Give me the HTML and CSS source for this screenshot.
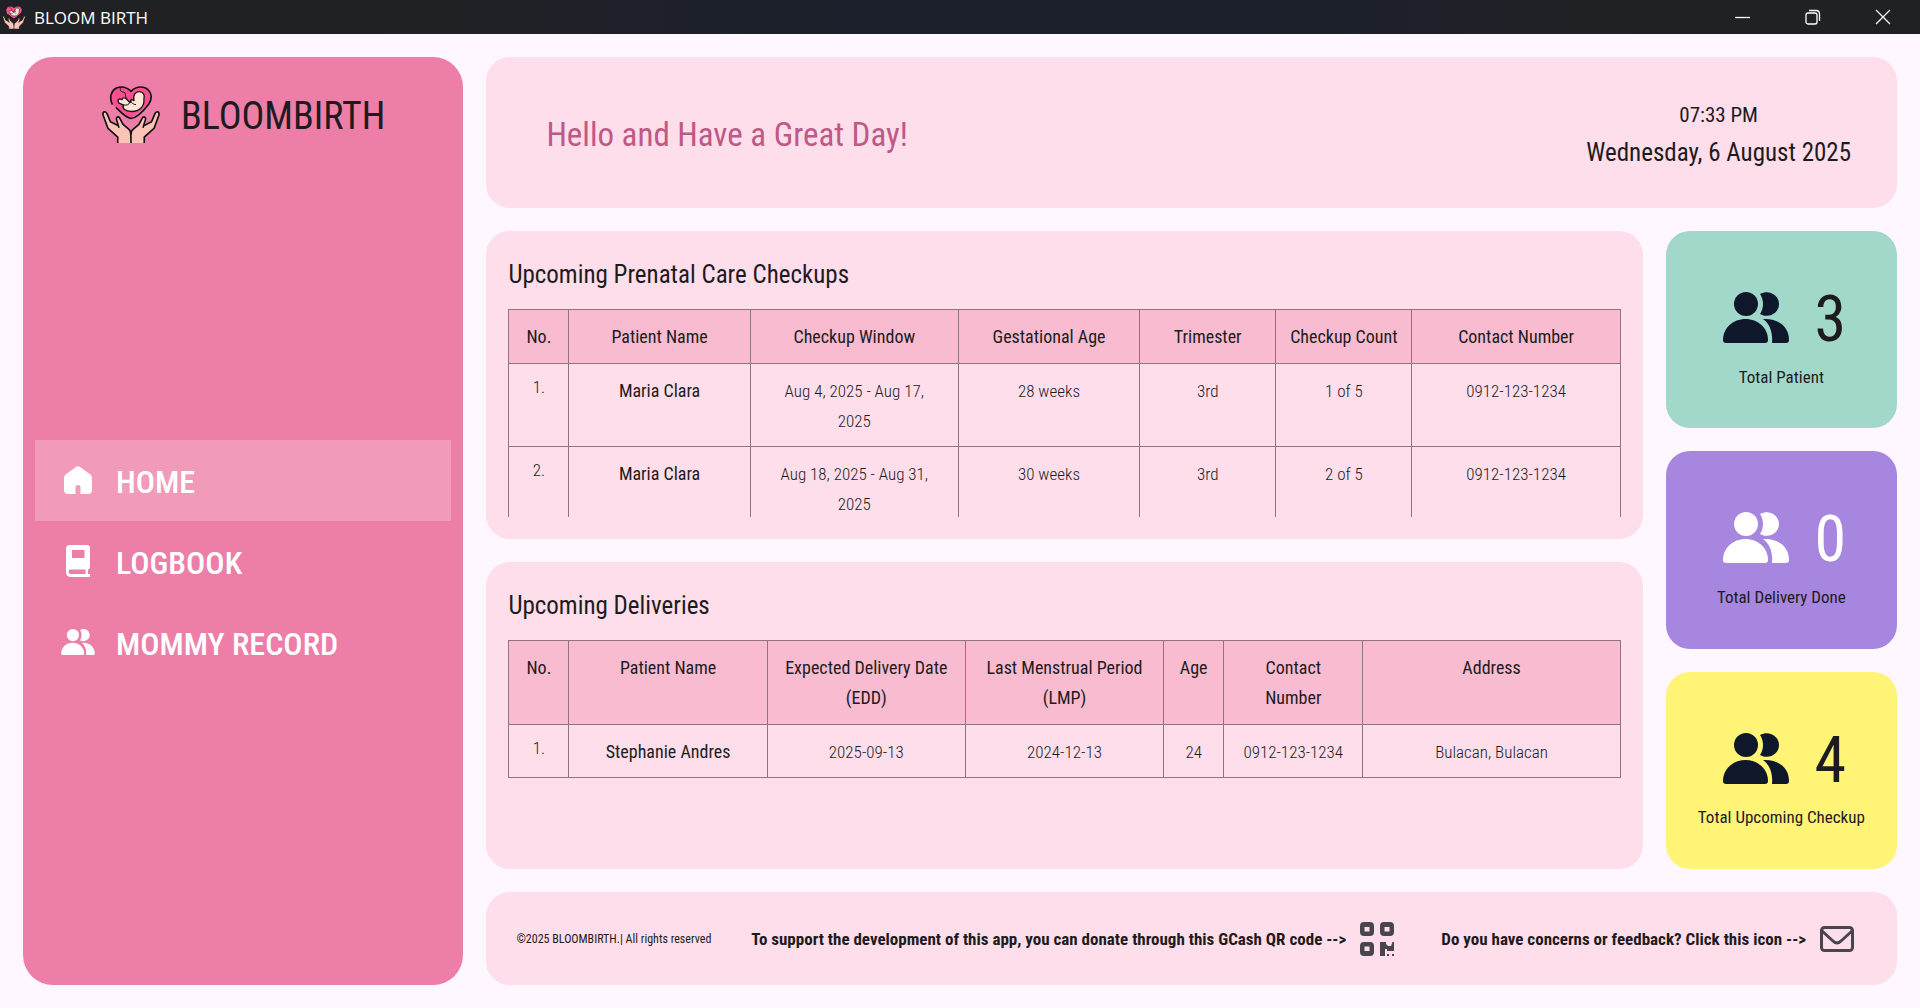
FILE: index.html
```html
<!DOCTYPE html>
<html lang="en">
<head>
<meta charset="utf-8">
<title>BLOOM BIRTH</title>
<meta name="viewport" content="width=device-width, initial-scale=1">
<link rel="stylesheet" href="styles.css">
</head>
<body>
<svg class="sprite" aria-hidden="true">
  <symbol id="logo" viewBox="30 25 180 175">
    <g stroke="#111" stroke-width="5" stroke-linejoin="round" stroke-linecap="round">
      <path stroke="none" fill="#fb4f92" d="M120 44C108 30 88 27 74 36 56 48 56 70 66 86L120 126 172 84C184 68 184 48 168 36 152 27 132 30 120 44Z"/>
      <path fill="none" d="M63 82C54 62 60 42 76 34 92 28 108 32 120 44 132 32 148 28 164 34 182 44 186 64 174 82 160 100 138 124 120 126 104 124 90 108 76 94"/>
      <path fill="#ffe6d6" stroke-width="4" d="M129 72C125 54 134 45 145 45 157 45 163 57 159 67 161 90 146 105 122 105 102 105 93 96 97 86L89 82C80 79 78 69 86 67L93 69C94 62 102 62 107 68L117 78 121 68Z"/>
      <path fill="none" stroke-width="3" d="M88 33C85 45 93 46 99 47 107 50 99 60 108 66M119 72C121 80 127 84 134 84M98 85C107 88 113 84 117 78"/>
      <path fill="#fdc4b5" stroke="none" d="M35 108C40 102 46 106 48 113L58 136 78 145 76 124C80 116 87 122 88 130L98 145 117 162 120 178 123 162 142 145 152 130C153 119 162 116 165 124L162 145 182 136 192 113C194 104 202 101 206 109L189 155 161 182V200H80V182L50 155Z"/>
      <path fill="none" d="M80 200V182L50 155 36 116C33 106 43 101 48 112L58 136 82 148M83 152 76 128C76 119 85 119 88 129L96 144 113 158C119 163 120 168 120 200M120 174C120 166 121 162 127 158L144 144 152 129C155 119 164 119 164 128L157 152M158 148 182 136 192 112C197 101 207 106 204 116L190 155 160 182V200"/>
    </g>
  </symbol>
  <symbol id="people" viewBox="0 0 66 51">
    <circle cx="23" cy="12" r="12"/>
    <path d="M37 2C46-3 56 3 56 12S46 27 37 22C41 16 41 8 37 2Z"/>
    <path d="M0 48C0 36 10 27 22.500 27S45 36 45 48Q45 51 42 51H3Q0 51 0 48Z"/>
    <path d="M40 27C54 26 66 34 66 48Q66 51 63 51H49C50 41 47 32 40 27Z"/>
  </symbol>
  <symbol id="home" viewBox="0 0 28 28">
    <path d="M12 1Q14-.7 16 1L26.500 8.500Q28 10 28 12V24Q28 28 24 28H16.500V21Q16.500 19 14 19T11.500 21V28H4Q0 28 0 24V12Q0 10 1.500 8.500Z"/>
  </symbol>
  <symbol id="book" viewBox="0 0 24 32">
    <path fill-rule="evenodd" d="M4 0H21Q24 0 24 3V22Q24 24 22 24.500V29H24V32H5Q0 32 0 27V4Q0 0 4 0ZM6 5V13H18.500V5ZM5 24.500Q2.500 24.500 2.500 26.700T5 29H19.500V24.500Z"/>
  </symbol>
  <symbol id="qr" viewBox="0 0 34 34">
    <path fill-rule="evenodd" d="M4 0H10Q14 0 14 4V10Q14 14 10 14H4Q0 14 0 10V4Q0 0 4 0ZM4.500 5V9.500H9.500V5ZM24 0H30Q34 0 34 4V10Q34 14 30 14H24Q20 14 20 10V4Q20 0 24 0ZM24.500 5V9.500H29.500V5ZM4 20H10Q14 20 14 24V30Q14 34 10 34H4Q0 34 0 30V24Q0 20 4 20ZM4.500 24.500V29H9.500V24.500Z"/>
    <path d="M20 20H26V22L28 24H31L32.500 20H34V29H27V27H25V34H20ZM27 32H29V34H27ZM32 32H34V34H32Z"/>
  </symbol>
  <symbol id="mail" viewBox="0 0 34 26">
    <g fill="none" stroke="currentColor" stroke-width="3" stroke-linejoin="round"><rect x="1.500" y="1.500" width="31" height="23" rx="3"/><path d="M2 5 13 15Q17 19 21 15L32 5"/></g>
  </symbol>
</svg>

<header class="titlebar">
  <svg class="titlebar-logo" aria-hidden="true"><use href="#logo"/></svg>
  <span class="titlebar-name">BLOOM BIRTH</span>
  <div class="window-controls">
    <button type="button" aria-label="Minimize"><svg viewBox="0 0 16 16"><path d="M0 8.500H15"/></svg></button>
    <button type="button" aria-label="Restore"><svg viewBox="0 0 16 16"><rect x="1" y="4" width="11" height="11" rx="2"/><path d="M4 1.500H11Q14.500 1.500 14.500 5V12"/></svg></button>
    <button type="button" aria-label="Close"><svg viewBox="0 0 16 16"><path d="M1 1 15 15M15 1 1 15"/></svg></button>
  </div>
</header>

<div class="app">
  <aside class="sidebar">
    <div class="brand">
      <svg class="brand-logo" aria-hidden="true"><use href="#logo"/></svg>
      <span>BLOOMBIRTH</span>
    </div>
    <nav class="menu">
      <a class="menu-item active" href="#home-page"><svg class="icon-home"><use href="#home"/></svg><span>HOME</span></a>
      <a class="menu-item" href="#logbook"><svg class="icon-book"><use href="#book"/></svg><span>LOGBOOK</span></a>
      <a class="menu-item" href="#mommy-record"><svg class="icon-people"><use href="#people"/></svg><span>MOMMY RECORD</span></a>
    </nav>
  </aside>

  <main class="main">
    <section class="card greeting">
      <h1>Hello and Have a Great Day!</h1>
      <div class="clock">
        <div class="clock-time">07:33 PM</div>
        <div class="clock-date">Wednesday, 6 August 2025</div>
      </div>
    </section>

    <div class="dashboard">
      <div class="panels">
        <section class="card panel">
          <h2>Upcoming Prenatal Care Checkups</h2>
          <div class="table-scroll">
            <table>
              <colgroup><col class="w-no"><col class="w-name"><col class="w-window"><col class="w-name"><col class="w-short"><col class="w-short"><col class="w-window"></colgroup>
              <thead>
                <tr><th>No.</th><th>Patient Name</th><th>Checkup Window</th><th>Gestational Age</th><th>Trimester</th><th>Checkup Count</th><th>Contact Number</th></tr>
              </thead>
              <tbody>
                <tr><td class="no">1.</td><td class="name">Maria Clara</td><td>Aug 4, 2025 - Aug 17, 2025</td><td>28 weeks</td><td>3rd</td><td>1 of 5</td><td>0912-123-1234</td></tr>
                <tr><td class="no">2.</td><td class="name">Maria Clara</td><td>Aug 18, 2025 - Aug 31, 2025</td><td>30 weeks</td><td>3rd</td><td>2 of 5</td><td>0912-123-1234</td></tr>
              </tbody>
            </table>
          </div>
        </section>

        <section class="card panel">
          <h2>Upcoming Deliveries</h2>
          <div class="table-scroll">
            <table>
              <colgroup><col class="w-no"><col class="w-date"><col class="w-date"><col class="w-date"><col class="w-no"><col class="w-contact"><col class="w-address"></colgroup>
              <thead>
                <tr><th>No.</th><th>Patient Name</th><th>Expected Delivery Date (EDD)</th><th>Last Menstrual Period (LMP)</th><th>Age</th><th>Contact Number</th><th>Address</th></tr>
              </thead>
              <tbody>
                <tr><td class="no">1.</td><td class="name">Stephanie Andres</td><td>2025-09-13</td><td>2024-12-13</td><td>24</td><td>0912-123-1234</td><td>Bulacan, Bulacan</td></tr>
              </tbody>
            </table>
          </div>
        </section>
      </div>

      <div class="stats">
        <section class="stat mint">
          <div class="stat-value"><svg><use href="#people"/></svg><span>3</span></div>
          <div class="stat-label">Total Patient</div>
        </section>
        <section class="stat purple">
          <div class="stat-value"><svg><use href="#people"/></svg><span>0</span></div>
          <div class="stat-label">Total Delivery Done</div>
        </section>
        <section class="stat yellow">
          <div class="stat-value"><svg><use href="#people"/></svg><span>4</span></div>
          <div class="stat-label">Total Upcoming Checkup</div>
        </section>
      </div>
    </div>

    <footer class="card footer">
      <small>©2025 BLOOMBIRTH.| All rights reserved</small>
      <div class="footer-item">
        <span>To support the development of this app, you can donate through this GCash QR code --&gt;</span>
        <button type="button" aria-label="Show GCash QR code"><svg class="icon-qr"><use href="#qr"/></svg></button>
      </div>
      <div class="footer-item">
        <span>Do you have concerns or feedback? Click this icon --&gt;</span>
        <button type="button" aria-label="Send feedback"><svg class="icon-mail"><use href="#mail"/></svg></button>
      </div>
    </footer>
  </main>
</div>
</body>
</html>
```
FILE: styles.css
```css
*, *::before, *::after { box-sizing: border-box; }

body {
  margin: 0;
  height: 100vh;
  min-height: 860px;
  display: flex;
  flex-direction: column;
  background: #fef7ff;
  color: #1d1b20;
  font-family: "Roboto Condensed", Roboto, "Liberation Sans", sans-serif;
}

h1, h2 { margin: 0; font-weight: 400; }
svg { display: block; flex: none; fill: currentColor; }
.sprite { position: absolute; width: 0; height: 0; }

button {
  border: 0;
  padding: 0;
  background: none;
  color: inherit;
  cursor: pointer;
}

/* Title bar */
.titlebar {
  flex: none;
  height: 34px;
  display: flex;
  align-items: center;
  gap: 8px;
  padding: 0 2px;
  background: linear-gradient(90deg, #202124 20%, #1b202c 45%, #1b202c 65%, #202124 85%);
  color: #fff;
}
.titlebar-logo { width: 24px; height: 24px; }
.titlebar-name { font: 17px "Open Sans", sans-serif; }
.window-controls { display: flex; margin-left: auto; }
.window-controls button {
  width: 70px;
  height: 34px;
  display: grid;
  place-items: center;
}
.window-controls svg {
  width: 16px;
  height: 16px;
  fill: none;
  stroke: #fff;
  stroke-width: 1.300;
}

/* Page frame */
.app {
  flex: 1;
  min-height: 0;
  display: flex;
  gap: 23px;
  padding: 23px;
}

.sidebar {
  flex: none;
  width: 23.5%;
  display: flex;
  flex-direction: column;
  padding: 26px 12px 8px;
  border-radius: 30px;
  background: #ec7ea8;
}
.brand {
  display: flex;
  align-items: center;
  justify-content: center;
  gap: 20px;
  font-size: 38px;
  line-height: 58px;
}
.brand span { padding-top: 4px; }
.brand-logo { width: 60px; height: 58px; }
.menu {
  flex: 1;
  display: flex;
  flex-direction: column;
  justify-content: center;
}
.menu-item {
  display: flex;
  align-items: center;
  height: 81px;
  padding-left: 26px;
  color: #fff;
  font-size: 32px;
  font-weight: 500;
  text-decoration: none;
}
.menu-item.active { background: #f19aba; }
.menu-item svg { width: 34px; margin-right: 21px; }
.menu-item span { padding-top: 4px; }
.icon-home { height: 28px; }
.icon-book { height: 32px; }
.icon-people { height: 26px; }

.main {
  flex: 1;
  min-width: 0;
  display: flex;
  flex-direction: column;
  gap: 23px;
}
.card { border-radius: 24px; background: #fddeea; }

.greeting {
  flex: none;
  min-height: 151px;
  display: flex;
  align-items: center;
  justify-content: space-between;
  padding: 3px 46px 0 60px;
}
.greeting h1 { color: #c05887; font-size: 33px; }
.clock { text-align: center; line-height: 37px; }
.clock-time { font-size: 21px; }
.clock-date { font-size: 25px; }

/* Dashboard */
.dashboard {
  flex: 1;
  min-height: 0;
  display: grid;
  grid-template-columns: 5fr 1fr;
  gap: 23px;
}
.panels, .stats {
  min-width: 0;
  min-height: 0;
  display: grid;
  gap: 23px;
}
.panels { grid-template-rows: repeat(2, minmax(0, 1fr)); }
.stats { grid-template-rows: repeat(3, minmax(0, 1fr)); }

.panel {
  display: flex;
  flex-direction: column;
  padding: 22px;
}
.panel h2 {
  margin-bottom: 12px;
  font-size: 25px;
  line-height: 44px;
}
.table-scroll {
  flex: 1;
  min-height: 0;
  overflow-y: auto;
  scrollbar-width: none;
}
table {
  width: 100%;
  table-layout: fixed;
  border-collapse: collapse;
  font-size: 17px;
  line-height: 30px;
}
.w-no { width: 60px; }
.w-name { width: 181px; }
.w-window { width: 208px; }
.w-short { width: 136px; }
.w-date { width: 198px; }
.w-contact { width: 139px; }
.w-address { width: 257px; }
th, td {
  border: 1px solid #8e7580;
  text-align: center;
  vertical-align: top;
}
th {
  padding: 12px 12px 11px;
  background: #f8bbd0;
  font-size: 18px;
  font-weight: 400;
}
td { padding: 12px 18px 10px; font-weight: 300; }
td.no { padding-top: 8px; }
td.name { font-size: 18px; font-weight: 400; }

.stat {
  display: flex;
  flex-direction: column;
  align-items: center;
  justify-content: center;
  border-radius: 24px;
}
.stat-value {
  height: 94px;
  display: flex;
  align-items: center;
  gap: 26px;
  padding-left: 6px;
  color: #0f172a;
  font-size: 64px;
}
.stat-value svg { width: 66px; height: 51px; }
.stat-value span { padding-top: 4px; color: #1d1b20; }
.stat-label { font-size: 17px; line-height: 24px; }
.mint { background: #a1d8ca; }
.purple { background: #a786df; }
.yellow { background: #fff475; }
.purple .stat-value, .purple .stat-value span { color: #fff; }

/* Footer */
.footer {
  flex: none;
  min-height: 93px;
  display: flex;
  align-items: center;
  gap: 40px;
  padding: 0 43px 0 30px;
  white-space: nowrap;
}
.footer small { font-size: 12px; }
.footer-item {
  display: flex;
  align-items: center;
  gap: 14px;
  font-size: 17px;
  font-weight: 700;
}
.footer-item:last-child { margin-left: auto; }
.footer-item button { color: #49454f; }
.icon-qr { width: 34px; height: 34px; }
.icon-mail { width: 34px; height: 26px; }
```
